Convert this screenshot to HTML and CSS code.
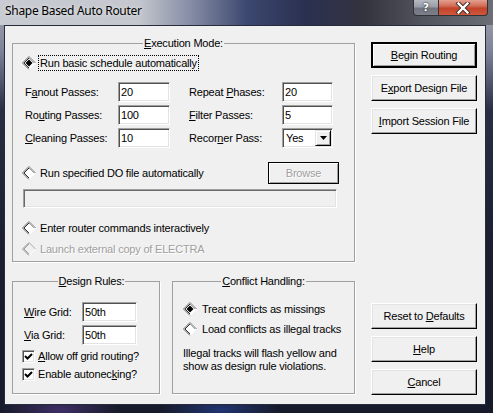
FILE: index.html
```html
<!DOCTYPE html>
<html>
<head>
<meta charset="utf-8">
<title>Shape Based Auto Router</title>
<link rel="stylesheet" href="styles.css">
</head>
<body>
<div class="window">
  <div class="titlebar">
    <span class="title">Shape Based Auto Router</span>
    <div class="caps">
      <div class="cap cap-help">?</div>
      <div class="cap cap-close">
        <svg width="16" height="12" viewBox="0 0 16 12">
          <path d="M3.5 1.5 L12.5 10.5 M12.5 1.5 L3.5 10.5" stroke="#3a2a26" stroke-width="4.2" stroke-linecap="square" fill="none"/>
          <path d="M3.5 1.5 L12.5 10.5 M12.5 1.5 L3.5 10.5" stroke="#ffffff" stroke-width="2.4" stroke-linecap="square" fill="none"/>
        </svg>
      </div>
    </div>
  </div>
  <div class="client">
    <div class="left">
      <fieldset class="group exec">
        <legend><u>E</u>xecution Mode:</legend>
        <div class="radio-row first">
          <svg class="radio" width="14" height="14" viewBox="0 0 14 14"><polygon points="7,0.5 13.5,7 7,13.5 0.5,7" fill="#fff"/><path d="M7 0.5 L0.5 7 L7 13.5" stroke="#606060" fill="none"/><path d="M7 0.5 L13.5 7" stroke="#7a7a7a" fill="none"/><path d="M13.5 7 L7 13.5" stroke="#ffffff" fill="none"/><path d="M7 2 L2 7 L7 12" stroke="#303030" fill="none"/><path d="M7 2 L12 7" stroke="#a0a0a0" fill="none"/><polygon points="7,3.5 10.5,7 7,10.5 3.5,7" fill="#000"/></svg>
          <span class="rlabel focus">Run basic schedule automatically</span>
        </div>
        <div class="passes">
          <span class="lbl">F<u>a</u>nout Passes:</span><input class="field" value="20">
          <span class="lbl r">Repeat <u>P</u>hases:</span><input class="field" value="20">
          <span class="lbl">Ro<u>u</u>ting Passes:</span><input class="field" value="100">
          <span class="lbl r"><u>F</u>ilter Passes:</span><input class="field" value="5">
          <span class="lbl"><u>C</u>leaning Passes:</span><input class="field" value="10">
          <span class="lbl r">Recor<u>n</u>er Pass:</span>
          <div class="combo"><span class="combo-text">Yes</span><span class="combo-btn"><svg width="7" height="4" viewBox="0 0 7 4"><polygon points="0,0 7,0 3.5,4" fill="#000"/></svg></span></div>
        </div>
        <div class="radio-row do-row">
          <svg class="radio" width="14" height="14" viewBox="0 0 14 14"><polygon points="7,0.5 13.5,7 7,13.5 0.5,7" fill="#fff"/><path d="M7 0.5 L0.5 7 L7 13.5" stroke="#606060" fill="none"/><path d="M7 0.5 L13.5 7" stroke="#7a7a7a" fill="none"/><path d="M13.5 7 L7 13.5" stroke="#ffffff" fill="none"/><path d="M7 2 L2 7 L7 12" stroke="#303030" fill="none"/><path d="M7 2 L12 7" stroke="#a0a0a0" fill="none"/></svg>
          <span class="rlabel">Run specified DO file automatically</span>
          <button class="btn browse" disabled>Browse</button>
        </div>
        <div class="file-field"></div>
        <div class="radio-row enter-row">
          <svg class="radio" width="14" height="14" viewBox="0 0 14 14"><polygon points="7,0.5 13.5,7 7,13.5 0.5,7" fill="#fff"/><path d="M7 0.5 L0.5 7 L7 13.5" stroke="#606060" fill="none"/><path d="M7 0.5 L13.5 7" stroke="#7a7a7a" fill="none"/><path d="M13.5 7 L7 13.5" stroke="#ffffff" fill="none"/><path d="M7 2 L2 7 L7 12" stroke="#303030" fill="none"/><path d="M7 2 L12 7" stroke="#a0a0a0" fill="none"/></svg>
          <span class="rlabel">Enter router commands interactively</span>
        </div>
        <div class="radio-row launch-row">
          <svg class="radio" width="14" height="14" viewBox="0 0 14 14"><polygon points="7,0.5 13.5,7 7,13.5 0.5,7" fill="#f0f0f0"/><path d="M7 0.5 L0.5 7 L7 13.5" stroke="#909090" fill="none"/><path d="M7 0.5 L13.5 7" stroke="#a8a8a8" fill="none"/><path d="M13.5 7 L7 13.5" stroke="#ffffff" fill="none"/><path d="M7 2 L2 7 L7 12" stroke="#a0a0a0" fill="none"/></svg>
          <span class="rlabel disabled">Launch external copy of ELECTRA</span>
        </div>
      </fieldset>
      <div class="bottom-groups">
        <fieldset class="group rules">
          <legend><u>D</u>esign Rules:</legend>
          <div class="grids">
            <span class="lbl"><u>W</u>ire Grid:</span><input class="field" value="50th">
            <span class="lbl"><u>V</u>ia Grid:</span><input class="field" value="50th">
          </div>
          <div class="check-row first-check">
            <span class="check"><svg width="9" height="9" viewBox="0 0 9 9"><path d="M1 4 L3.5 6.5 L8 2" stroke="#000" stroke-width="2" fill="none"/></svg></span>
            <span><u>A</u>llow off grid routing?</span>
          </div>
          <div class="check-row">
            <span class="check"><svg width="9" height="9" viewBox="0 0 9 9"><path d="M1 4 L3.5 6.5 L8 2" stroke="#000" stroke-width="2" fill="none"/></svg></span>
            <span>Enable autonec<u>k</u>ing?</span>
          </div>
        </fieldset>
        <fieldset class="group conflict">
          <legend><u>C</u>onflict Handling:</legend>
          <div class="radio-row treat-row">
            <svg class="radio" width="14" height="14" viewBox="0 0 14 14"><polygon points="7,0.5 13.5,7 7,13.5 0.5,7" fill="#fff"/><path d="M7 0.5 L0.5 7 L7 13.5" stroke="#606060" fill="none"/><path d="M7 0.5 L13.5 7" stroke="#7a7a7a" fill="none"/><path d="M13.5 7 L7 13.5" stroke="#ffffff" fill="none"/><path d="M7 2 L2 7 L7 12" stroke="#303030" fill="none"/><path d="M7 2 L12 7" stroke="#a0a0a0" fill="none"/><polygon points="7,3.5 10.5,7 7,10.5 3.5,7" fill="#000"/></svg>
            <span class="rlabel">Treat conflicts as missings</span>
          </div>
          <div class="radio-row load-row">
            <svg class="radio" width="14" height="14" viewBox="0 0 14 14"><polygon points="7,0.5 13.5,7 7,13.5 0.5,7" fill="#fff"/><path d="M7 0.5 L0.5 7 L7 13.5" stroke="#606060" fill="none"/><path d="M7 0.5 L13.5 7" stroke="#7a7a7a" fill="none"/><path d="M13.5 7 L7 13.5" stroke="#ffffff" fill="none"/><path d="M7 2 L2 7 L7 12" stroke="#303030" fill="none"/><path d="M7 2 L12 7" stroke="#a0a0a0" fill="none"/></svg>
            <span class="rlabel">Load conflicts as illegal tracks</span>
          </div>
          <p class="note">Illegal tracks will flash yellow and<br>show as design rule violations.</p>
        </fieldset>
      </div>
    </div>
    <div class="right">
      <div class="stack">
        <button class="btn default"><u>B</u>egin Routing</button>
        <button class="btn">E<u>x</u>port Design File</button>
        <button class="btn"><u>I</u>mport Session File</button>
      </div>
      <div class="stack">
        <button class="btn">Reset to <u>D</u>efaults</button>
        <button class="btn"><u>H</u>elp</button>
        <button class="btn"><u>C</u>ancel</button>
      </div>
    </div>
  </div>
</div>
</body>
</html>
```
FILE: styles.css
```css
* { box-sizing: border-box; }
html, body { margin: 0; padding: 0; }
body {
  width: 493px;
  height: 413px;
  overflow: hidden;
  font-family: "Liberation Sans", Arial, sans-serif;
  font-size: 11px;
  letter-spacing: -0.2px;
  color: #000;
  background: #141824;
}
.window {
  width: 493px;
  height: 413px;
  display: flex;
  flex-direction: column;
  background:
    radial-gradient(ellipse 60px 20px at 60px 410px, rgba(90,60,140,0.6), transparent),
    radial-gradient(ellipse 60px 20px at 220px 410px, rgba(40,70,160,0.6), transparent),
    linear-gradient(180deg, #a4a8b0 0, #80849a 50px, #2a2e44 110px, #1a1e30 250px, #161a2a 100%);
}
.titlebar {
  height: 25px;
  flex: none;
  display: flex;
  align-items: flex-start;
  padding: 0 5px 0 5px;
  background: linear-gradient(90deg, #c8ccd2 0, #c4c8ce 28%, #8a90a8 38%, #3c4870 50%, #2a3050 62%, #34343e 74%, #52545e 86%, #6c6e76 100%);
}
.title {
  font-family: "Noto Sans", "Open Sans", sans-serif;
  font-size: 12px;
  line-height: 16px;
  margin-top: 3px;
  letter-spacing: -0.3px;
  color: #000;
  text-shadow: 0 0 4px rgba(255,255,255,0.7);
}
.caps {
  margin-left: auto;
  display: flex;
}
.cap {
  height: 16px;
  border: 1px solid #303236;
  border-top: none;
  display: flex;
  align-items: center;
  justify-content: center;
}
.cap-help {
  width: 26px;
  border-radius: 0 0 0 4px;
  background: linear-gradient(180deg, #b4b8c0 0, #9a9ea8 45%, #70747e 55%, #7c808a 100%);
  color: #fff;
  font-family: "DejaVu Sans", sans-serif;
  font-weight: bold;
  font-size: 11px;
  letter-spacing: 0;
  text-shadow: 0 0 2px #333, 0 0 1px #222;
}
.cap-close {
  width: 49px;
  border-left: none;
  border-radius: 0 0 4px 0;
  background: linear-gradient(180deg, #e4a090 0, #d26c56 40%, #c2422a 55%, #d0583c 100%);
}
.client {
  margin: 0 7px 0 4px;
  height: 380px;
  flex: none;
  border: 1px solid #262c3c;
  background: #f0f0f0;
  display: flex;
}
.left {
  width: 350px;
  padding: 11px 0 0 7px;
  display: flex;
  flex-direction: column;
}
.group {
  margin: 0;
  padding: 0;
  min-width: 0;
  border: 1px solid #a0a0a0;
  box-shadow: 1px 1px 0 #fff;
}
.group legend {
  margin: 0 auto;
  padding: 0 1px;
  line-height: 13px;
  background: #f0f0f0;
}
.exec {
  width: 343px;
  padding: 5px 0 4px 0;
}
.radio-row {
  height: 16px;
  display: flex;
  align-items: center;
  padding-left: 9px;
}
.radio { flex: none; }
.rlabel {
  margin-left: 2px;
  padding: 1px;
  border: 1px dotted transparent;
  line-height: 12px;
  white-space: nowrap;
}
.rlabel.focus { border-color: #000; }
.rlabel.disabled {
  color: #a0a0a0;
  text-shadow: 1px 1px 0 #fff;
}
.passes {
  margin: 11px 0 0 12px;
  display: grid;
  grid-template-columns: 93px 52px 112px 51px;
  grid-auto-rows: 20px;
  row-gap: 3px;
  align-items: center;
}
.lbl { white-space: nowrap; }
.lbl.r { padding-left: 19px; }
.field {
  height: 20px;
  width: 100%;
  margin: 0;
  padding: 0 2px;
  font: inherit;
  letter-spacing: inherit;
  color: #000;
  background: #fff;
  border: 1px solid;
  border-color: #a0a0a0 #fff #fff #a0a0a0;
  box-shadow: inset 1px 1px 0 #505050, inset -1px -1px 0 #e3e3e3;
  outline: none;
}
.combo {
  height: 20px;
  display: flex;
  align-items: center;
  background: #fff;
  border: 1px solid;
  border-color: #a0a0a0 #fff #fff #a0a0a0;
  box-shadow: inset 1px 1px 0 #505050, inset -1px -1px 0 #e3e3e3;
  padding: 1px;
}
.combo-text { padding-left: 2px; }
.combo-btn {
  margin-left: auto;
  width: 16px;
  height: 16px;
  background: #f0f0f0;
  border: 1px solid;
  border-color: #e3e3e3 #000 #000 #e3e3e3;
  box-shadow: inset 1px 1px 0 #fff, inset -1px -1px 0 #a0a0a0;
  display: flex;
  align-items: center;
  justify-content: center;
}
.do-row {
  margin-top: 14px;
  height: 22px;
}
.btn {
  display: block;
  margin: 0;
  padding: 0;
  font: inherit;
  letter-spacing: inherit;
  color: #000;
  background: #f0f0f0;
  border: 1px solid;
  border-color: #fff #000 #000 #fff;
  box-shadow: inset -1px -1px 0 #a0a0a0, inset 1px 1px 0 #e3e3e3;
  text-align: center;
}
.btn.browse {
  margin-left: auto;
  margin-right: 15px;
  width: 71px;
  height: 22px;
  border-color: #000;
  box-shadow: inset 1px 1px 0 #fff, inset -1px -1px 0 #a0a0a0;
  color: #a0a0a0;
  text-shadow: 1px 1px 0 #fff;
}
.file-field {
  margin: 5px 0 0 10px;
  width: 314px;
  height: 19px;
  background: #f0f0f0;
  border: 1px solid;
  border-color: #a0a0a0 #fff #fff #a0a0a0;
  box-shadow: inset 1px 1px 0 #696969, inset -1px -1px 0 #e3e3e3;
}
.enter-row { margin-top: 12px; }
.launch-row { margin-top: 5px; }
.bottom-groups {
  margin-top: 13px;
  display: flex;
  gap: 12px;
  width: 343px;
}
.rules {
  width: 148px;
  height: 119px;
  padding: 14px 0 0 11px;
}
.conflict {
  width: 183px;
  height: 119px;
  padding: 13px 0 0 0;
}
.grids {
  display: grid;
  grid-template-columns: 58px 55px;
  grid-auto-rows: 19px;
  row-gap: 4px;
  align-items: center;
}
.check-row {
  height: 16px;
  margin-top: 2px;
  margin-left: -2px;
  display: flex;
  align-items: center;
  gap: 3px;
}
.check-row.first-check { margin-top: 4px; }
.check {
  width: 13px;
  height: 13px;
  flex: none;
  background: #fff;
  border: 1px solid;
  border-color: #a0a0a0 #fff #fff #a0a0a0;
  box-shadow: inset 1px 1px 0 #505050, inset -1px -1px 0 #e3e3e3;
  display: flex;
  align-items: center;
  justify-content: center;
}
.treat-row { padding-left: 10px; }
.load-row { padding-left: 10px; margin-top: 4px; }
.conflict .rlabel { margin-left: 3px; }
.note {
  margin: 10px 0 0 10px;
  line-height: 13px;
}
.right {
  width: 106px;
  margin-left: 16px;
  padding: 16px 0 9px 0;
  display: flex;
  flex-direction: column;
  justify-content: space-between;
}
.stack {
  display: flex;
  flex-direction: column;
  gap: 7px;
}
.stack .btn {
  width: 106px;
  height: 26px;
}
.btn.default {
  border: 2px solid #000;
  box-shadow: inset 1px 1px 0 #fff, inset -1px -1px 0 #a0a0a0;
}
```
